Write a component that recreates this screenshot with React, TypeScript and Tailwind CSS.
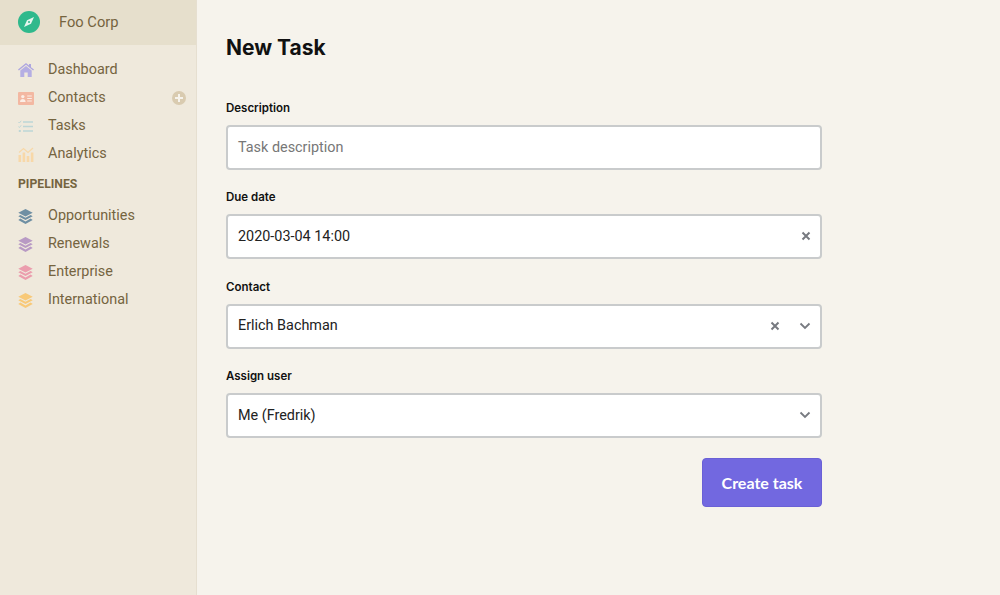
import { type ReactNode } from "react";

const Stack = ({ color }: { color: string }) => (
  <svg width="15" height="15" viewBox="0 0 15 15" className="shrink-0">
    <path d="M7.5 0 .3 3.8l7.2 3.8 7.2-3.8z" fill={color} />
    <path d="M2.4 6 .3 7.3l7.2 3.8 7.2-3.8L12.6 6 7.5 8.8z" fill={color} />
    <path d="M2.4 9.6.3 10.9 7.5 15l7.2-4.1-2.1-1.3-5.1 2.8z" fill={color} />
  </svg>
);

const HomeIcon = () => (
  <svg width="16" height="14" viewBox="0 0 16 14" className="shrink-0">
    <path d="M8 0 0 6.6l.9 1L8 1.8l7.1 5.8.9-1-3-2.4V1h-2v1.6z" fill="#aea6e0" />
    <path d="M8 3 2.3 7.6V14h4V9.5h3.4V14h4V7.6z" fill="#b5aee3" />
  </svg>
);

const ContactIcon = () => (
  <svg width="16" height="13" viewBox="0 0 16 13" className="shrink-0">
    <rect width="16" height="13" rx="1" fill="#f3b8a2" />
    <circle cx="4.8" cy="4.6" r="1.7" fill="#fbeee6" />
    <path d="M2 10c0-2 1.2-3 2.8-3s2.8 1 2.8 3z" fill="#fbeee6" />
    <path d="M9.2 4h4.6M9.2 6.5h4.6M9.2 9h4.6" stroke="#fbeee6" strokeWidth="1" />
  </svg>
);

const TasksIcon = () => (
  <svg width="15" height="13" viewBox="0 0 15 13" className="shrink-0">
    <path d="M5 2h10M5 6.5h10M5 11h10" stroke="#bdd6d6" strokeWidth="1.5" />
    <path d="M.4 2l1 1L3.2.8M.4 6.5l1 1 1.8-2.2" stroke="#bdd6d6" strokeWidth="1" fill="none" />
    <rect x="0.8" y="10" width="2" height="2" fill="#bdd6d6" />
  </svg>
);

const ChartIcon = () => (
  <svg width="16" height="15" viewBox="0 0 16 15" className="shrink-0">
    <rect x="0.5" y="8" width="2.6" height="7" fill="#f8d8a8" />
    <rect x="4.6" y="5.5" width="2.6" height="9.5" fill="#f8d8a8" />
    <rect x="8.7" y="9" width="2.6" height="6" fill="#f8d8a8" />
    <rect x="12.8" y="5.5" width="2.6" height="9.5" fill="#f8d8a8" />
    <path d="M1 5.5 5.5 1.5l4.5 4L15 1" stroke="#f8d8a8" strokeWidth="1.2" fill="none" />
  </svg>
);

const NavItem = ({ icon, label, extra }: { icon: ReactNode; label: string; extra?: ReactNode }) => (
  <div className="flex h-7 items-center pl-[18px] pr-[10px]">
    <div className="flex w-[30px] items-center">{icon}</div>
    <span className="flex-1 text-[14.4px] text-[#75643f]">{label}</span>
    {extra}
  </div>
);

const Cross = () => (
  <svg width="10" height="10" viewBox="0 0 10 10">
    <path d="M1.5 1.5l7 7M8.5 1.5l-7 7" stroke="#777a80" strokeWidth="2" />
  </svg>
);

const Chevron = () => (
  <svg width="12" height="8" viewBox="0 0 12 8">
    <path d="M1.5 1.5 6 6l4.5-4.5" stroke="#777a80" strokeWidth="1.8" fill="none" />
  </svg>
);

const Field = ({ label, children }: { label: string; children: ReactNode }) => (
  <div>
    <div className="mb-[9px] font-['Inter',sans-serif] text-[11.5px] leading-[15px] font-semibold text-[#111]">{label}</div>
    <div className="flex h-[45px] items-center rounded border-2 border-[#c9cbcc] bg-white pl-[10px] text-[14.4px] text-[#222]">
      {children}
    </div>
  </div>
);

export default function App() {
  return (
    <div className="flex h-[595px] w-[1000px] overflow-hidden bg-[#f6f3ec] font-['Roboto',sans-serif]">
      <aside className="w-[197px] shrink-0 border-r border-[#e6dfd0] bg-[#efe9dc]">
        <div className="flex h-[45px] items-center bg-[#e6dfcc] pb-[1px] pl-[18px]">
          <svg width="22" height="22" viewBox="0 0 22 22">
            <circle cx="11" cy="11" r="11" fill="#2fb98c" />
            <path d="M16 6 13 12.8 6 16 9 9.2z" fill="#e6f6ef" />
            <circle cx="11" cy="11" r="1" fill="#2fb98c" />
          </svg>
          <span className="ml-[19px] text-[14.7px] text-[#75643f]">Foo Corp</span>
        </div>
        <nav className="mt-[11px]">
          <NavItem icon={<HomeIcon />} label="Dashboard" />
          <NavItem
            icon={<ContactIcon />}
            label="Contacts"
            extra={
              <span className="flex h-[14px] w-[14px] items-center justify-center rounded-full bg-[#d9cbb0]">
                <svg width="8" height="8" viewBox="0 0 8 8">
                  <path d="M4 0v8M0 4h8" stroke="#f6f3ec" strokeWidth="2" />
                </svg>
              </span>
            }
          />
          <NavItem icon={<TasksIcon />} label="Tasks" />
          <NavItem icon={<ChartIcon />} label="Analytics" />
        </nav>
        <div className="mt-[9px] mb-[10px] pl-[18px] text-[12.2px] leading-[15px] font-bold text-[#75643f]">PIPELINES</div>
        <nav>
          <NavItem icon={<Stack color="#6f8fa3" />} label="Opportunities" />
          <NavItem icon={<Stack color="#b89ac4" />} label="Renewals" />
          <NavItem icon={<Stack color="#eb9dad" />} label="Enterprise" />
          <NavItem icon={<Stack color="#f8c978" />} label="International" />
        </nav>
      </aside>
      <main className="w-[655px] pt-[33px] pl-[29px] font-['Inter',sans-serif]">
        <h1 className="text-[21px] leading-[30px] font-bold text-[#111]">New Task</h1>
        <form className="mt-[38px] flex w-[596px] flex-col gap-[20.33px] font-['Roboto',sans-serif]">
          <Field label="Description">
            <span className="text-[#777]">Task description</span>
          </Field>
          <Field label="Due date">
            <span className="flex-1">2020-03-04 14:00</span>
            <span className="mr-[9px] mb-[1px] flex"><Cross /></span>
          </Field>
          <Field label="Contact">
            <span className="flex-1">Erlich Bachman</span>
            <span className="mr-[19px] flex"><Cross /></span>
            <span className="mr-[9px] flex"><Chevron /></span>
          </Field>
          <Field label="Assign user">
            <span className="flex-1">Me (Fredrik)</span>
            <span className="mr-[9px] flex"><Chevron /></span>
          </Field>
          <div className="flex justify-end">
            <button
              type="button"
              className="h-[49px] w-[120px] rounded border border-[#6a60d6] bg-[#7268e0] font-['Lato',sans-serif] text-base font-bold text-white"
            >
              Create task
            </button>
          </div>
        </form>
      </main>
    </div>
  );
}
